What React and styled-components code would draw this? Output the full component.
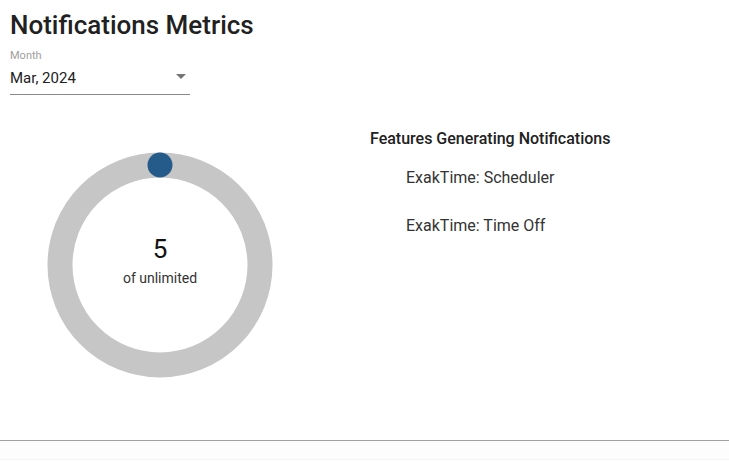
import React from "react"
import styled, { createGlobalStyle } from "styled-components"

const GlobalStyle = createGlobalStyle`
  body {
    margin: 0;
    background: #ffffff;
    font-family: Roboto, "Noto Sans", Arial, sans-serif;
    color: #212121;
  }
`

const Page = styled.div`
  padding: 0 10px;
`

const Title = styled.h1`
  margin: 10px 0 0;
  font-size: 26px;
  line-height: 30px;
  font-weight: 500;
  color: #212121;
`

const Field = styled.div`
  width: 180px;
  margin-top: 9px;
`

const FieldLabel = styled.div`
  font-size: 11px;
  line-height: 13px;
  color: #9e9e9e;
`

const SelectBox = styled.div`
  display: flex;
  align-items: center;
  justify-content: space-between;
  margin-top: 6px;
  padding: 0 4px 6px 0;
  border-bottom: 1px solid #8a8a8a;
  font-size: 15px;
  line-height: 20px;
  color: #212121;
`

const Caret = styled.span`
  width: 0;
  height: 0;
  margin-top: -3px;
  border-left: 5px solid transparent;
  border-right: 5px solid transparent;
  border-top: 5px solid #757575;
`

const Content = styled.div`
  display: flex;
  align-items: flex-start;
  margin-top: 34px;
`

const ChartColumn = styled.div`
  width: 300px;
  display: flex;
  justify-content: center;
  padding-top: 23px;
`

const Donut = styled.div`
  display: grid;
  width: 226px;
  height: 226px;

  & > * {
    grid-area: 1 / 1;
  }
`

const Center = styled.div`
  display: flex;
  flex-direction: column;
  align-items: center;
  justify-content: center;
  padding-bottom: 10px;
`

const Count = styled.div`
  font-size: 26px;
  line-height: 30px;
  color: #111111;
`

const Limit = styled.div`
  margin-top: 5px;
  font-size: 14px;
  line-height: 18px;
  color: #333333;
`

const Features = styled.div`
  margin-left: 60px;
`

const FeaturesTitle = styled.div`
  font-size: 16px;
  line-height: 20px;
  font-weight: 500;
  color: #212121;
`

const FeatureList = styled.ul`
  list-style: none;
  margin: 17px 0 0;
  padding: 0 0 0 36px;
`

const FeatureItem = styled.li`
  font-size: 16px;
  line-height: 24px;
  color: #333333;
  margin-bottom: 24px;
`

const Footer = styled.div`
  margin-top: 62px;
  border-top: 1px solid #a0a0a0;
  height: 18px;
  background: #fdfdfd;
  border-bottom: 1px solid #f4f4f4;
`

const features = ["ExakTime: Scheduler", "ExakTime: Time Off"]

const DonutChart = ({ value, label }) => (
  <Donut>
    <svg width="226" height="226" viewBox="0 0 226 226">
      <circle cx="113" cy="113" r="100" fill="none" stroke="#c6c6c6" strokeWidth="25" />
      <circle cx="113" cy="13" r="12.5" fill="#245b8a" />
    </svg>
    <Center>
      <Count>{value}</Count>
      <Limit>{label}</Limit>
    </Center>
  </Donut>
)

export default function App() {
  return (
    <>
      <GlobalStyle />
      <Page>
        <Title>Notifications Metrics</Title>
        <Field>
          <FieldLabel>Month</FieldLabel>
          <SelectBox>
            <span>Mar, 2024</span>
            <Caret />
          </SelectBox>
        </Field>
        <Content>
          <ChartColumn>
            <DonutChart value="5" label="of unlimited" />
          </ChartColumn>
          <Features>
            <FeaturesTitle>Features Generating Notifications</FeaturesTitle>
            <FeatureList>
              {features.map((f) => (
                <FeatureItem key={f}>{f}</FeatureItem>
              ))}
            </FeatureList>
          </Features>
        </Content>
      </Page>
      <Footer />
    </>
  )
}
